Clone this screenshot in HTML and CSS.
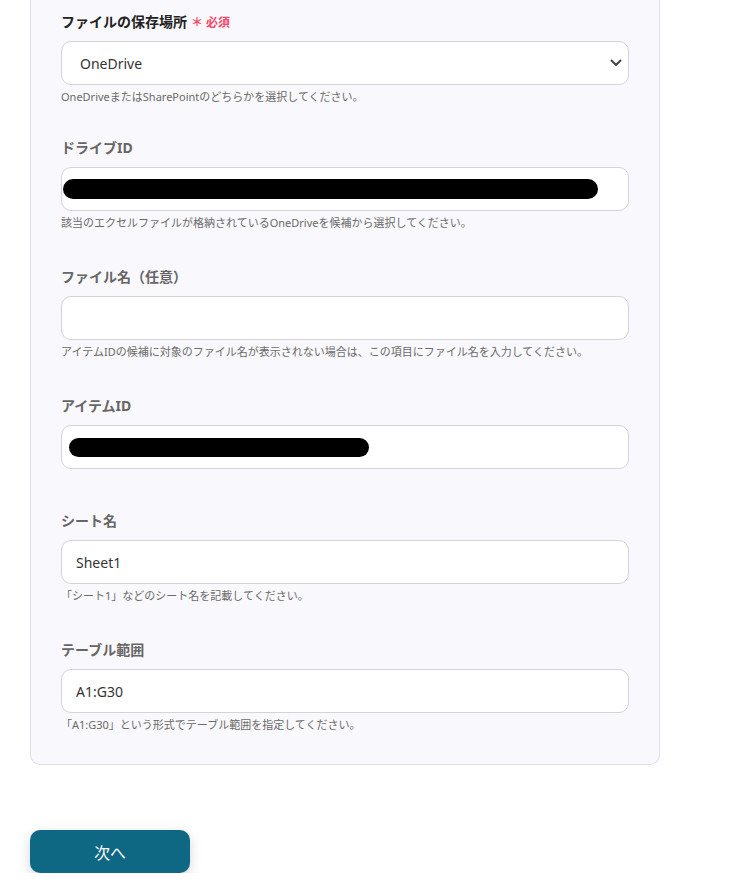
FILE: index.html
```html
<!DOCTYPE html>
<html>
<head>
  <title>設定</title>
  <link rel="stylesheet" href="styles.css">
</head>
<body>
  <div class="page">
    <div class="card">
      <div class="field field-first">
        <label class="label label-strong">ファイルの保存場所<span class="required">＊ 必須</span></label>
        <div class="select-wrap">
          <select class="select">
            <option>OneDrive</option>
            <option>SharePoint</option>
          </select>
          <svg class="chevron" width="12" height="8" viewBox="0 0 12 8">
            <path d="M1.5 1.5 L6 6 L10.5 1.5" fill="none" stroke="#444" stroke-width="2" stroke-linecap="round" stroke-linejoin="round"/>
          </svg>
        </div>
        <p class="help">OneDriveまたはSharePointのどちらかを選択してください。</p>
      </div>

      <div class="field">
        <label class="label">ドライブID</label>
        <div class="input input-redacted">
          <span class="redact redact-long"></span>
        </div>
        <p class="help">該当のエクセルファイルが格納されているOneDriveを候補から選択してください。</p>
      </div>

      <div class="field">
        <label class="label">ファイル名（任意）</label>
        <input class="input" type="text" value="">
        <p class="help">アイテムIDの候補に対象のファイル名が表示されない場合は、この項目にファイル名を入力してください。</p>
      </div>

      <div class="field field-nohelp">
        <label class="label">アイテムID</label>
        <div class="input input-redacted">
          <span class="redact redact-short"></span>
        </div>
      </div>

      <div class="field">
        <label class="label">シート名</label>
        <input class="input" type="text" value="Sheet1">
        <p class="help">「シート1」などのシート名を記載してください。</p>
      </div>

      <div class="field field-last">
        <label class="label">テーブル範囲</label>
        <input class="input" type="text" value="A1:G30">
        <p class="help">「A1:G30」という形式でテーブル範囲を指定してください。</p>
      </div>
    </div>

    <button class="next-btn">次へ</button>
  </div>
</body>
</html>
```

FILE: styles.css
```css
body {
  margin: 0;
  background-color: #ffffff;
  font-family: "Noto Sans", "Noto Sans CJK JP", sans-serif;
  color: #333333;
}

.page {
  padding: 0 30px;
}

.card {
  width: 568px;
  padding: 12px 30px 31px 30px;
  background-color: #f9f8fc;
  border: 1px solid #e1e0e8;
  border-top: none;
  border-radius: 0 0 10px 10px;
}

.field {
  margin-bottom: 36px;
}

.field-first {
  margin-bottom: 33px;
}

.field-nohelp {
  margin-bottom: 42px;
}

.field-last {
  margin-bottom: 0;
}

.label {
  display: block;
  height: 20px;
  line-height: 20px;
  margin-bottom: 9px;
  font-size: 14px;
  font-weight: bold;
  color: #666666;
}

.label-strong {
  color: #222222;
}

.required {
  margin-left: 4px;
  font-size: 12px;
  color: #f5476a;
}

.select-wrap {
  position: relative;
}

.select {
  display: block;
  width: 568px;
  height: 44px;
  padding: 0 40px 0 18px;
  box-sizing: border-box;
  appearance: none;
  -webkit-appearance: none;
  background-color: #ffffff;
  border: 1px solid #d3d3dc;
  border-radius: 10px;
  font-family: inherit;
  font-size: 14px;
  color: #333333;
}

.chevron {
  position: absolute;
  right: 7px;
  top: 18px;
}

.input {
  display: block;
  width: 568px;
  height: 44px;
  padding: 0 14px;
  box-sizing: border-box;
  background-color: #ffffff;
  border: 1px solid #d3d3dc;
  border-radius: 10px;
  font-family: inherit;
  font-size: 14px;
  color: #333333;
}

.input-redacted {
  display: flex;
  align-items: center;
  padding: 0;
}

.redact {
  display: block;
  background-color: #000000;
  border-radius: 10px;
}

.redact-long {
  width: 535px;
  height: 20px;
  margin-left: 1px;
}

.redact-short {
  width: 300px;
  height: 19px;
  margin-left: 7px;
}

.help {
  margin: 4px 0 0 0;
  line-height: 16px;
  font-size: 11px;
  color: #6a6a6a;
}

.next-btn {
  display: block;
  margin-top: 65px;
  width: 160px;
  height: 43px;
  background-color: #0e6783;
  color: #ffffff;
  border: none;
  border-radius: 10px;
  font-family: inherit;
  font-size: 16px;
  box-shadow: 0 4px 12px rgba(20, 30, 60, 0.18);
  cursor: pointer;
}
```
